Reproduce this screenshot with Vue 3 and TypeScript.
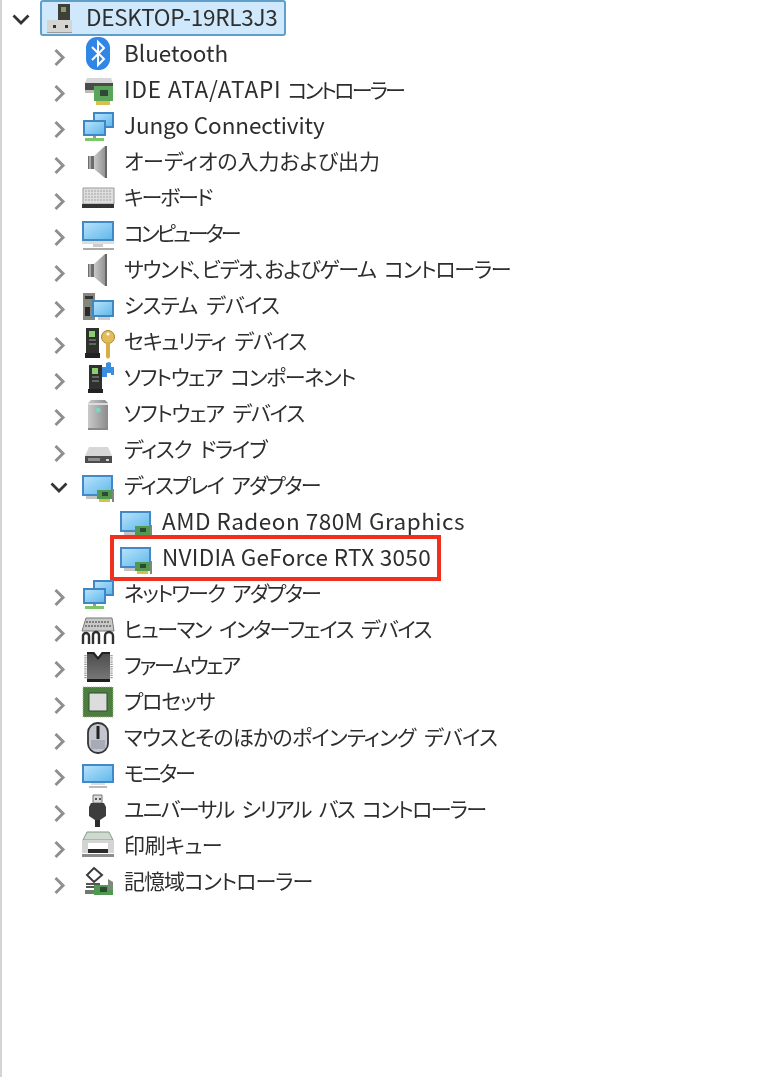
<script setup lang="ts">
interface Row { label: string; icon: string; level: number; ls: number; latinLs?: number; open?: boolean; leaf?: boolean; root?: boolean; marked?: boolean }
const rows: Row[] = [
  { label: 'DESKTOP-19RL3J3', icon: 'root', level: 0, ls: 0, latinLs: -0.27, open: true, root: true },
  { label: 'Bluetooth', icon: 'bluetooth', level: 1, ls: 0, latinLs: 0 },
  { label: 'IDE ATA/ATAPI コントローラー', icon: 'ide', level: 1, ls: -2.75, latinLs: 0.9 },
  { label: 'Jungo Connectivity', icon: 'network', level: 1, ls: 0, latinLs: -0.1 },
  { label: 'オーディオの入力および出力', icon: 'speaker', level: 1, ls: -0.07 },
  { label: 'キーボード', icon: 'keyboard', level: 1, ls: -2.15 },
  { label: 'コンピューター', icon: 'computer', level: 1, ls: -3 },
  { label: 'サウンド、ビデオ、およびゲーム コントローラー', icon: 'speaker', level: 1, ls: -1.22 },
  { label: 'システム デバイス', icon: 'system', level: 1, ls: -0.8 },
  { label: 'セキュリティ デバイス', icon: 'security', level: 1, ls: -1.15 },
  { label: 'ソフトウェア コンポーネント', icon: 'component', level: 1, ls: -1.44 },
  { label: 'ソフトウェア デバイス', icon: 'swdevice', level: 1, ls: -1.15 },
  { label: 'ディスク ドライブ', icon: 'disk', level: 1, ls: -1.25 },
  { label: 'ディスプレイ アダプター', icon: 'display', level: 1, ls: -1.72, open: true },
  { label: 'AMD Radeon 780M Graphics', icon: 'display', level: 2, ls: 0, latinLs: 0.5, leaf: true },
  { label: 'NVIDIA GeForce RTX 3050', icon: 'display', level: 2, ls: 0, latinLs: 0.3, leaf: true, marked: true },
  { label: 'ネットワーク アダプター', icon: 'network', level: 1, ls: -1.82 },
  { label: 'ヒューマン インターフェイス デバイス', icon: 'hid', level: 1, ls: -1.58 },
  { label: 'ファームウェア', icon: 'firmware', level: 1, ls: -2.15 },
  { label: 'プロセッサ', icon: 'cpu', level: 1, ls: -1.15 },
  { label: 'マウスとそのほかのポインティング デバイス', icon: 'mouse', level: 1, ls: -0.82 },
  { label: 'モニター', icon: 'monitor', level: 1, ls: -2.15 },
  { label: 'ユニバーサル シリアル バス コントローラー', icon: 'usb', level: 1, ls: -1.65 },
  { label: '印刷キュー', icon: 'printer', level: 1, ls: -0.35 },
  { label: '記憶域コントローラー', icon: 'storage', level: 1, ls: -0.95 },
]

interface Run { text: string; latin: boolean }
function runs(label: string): Run[] {
  const out: Run[] = []
  for (const m of label.matchAll(/[A-Za-z0-9][\x20-\x7e]*|[^A-Za-z0-9]+/g)) {
    out.push({ text: m[0], latin: /^[A-Za-z0-9]/.test(m[0]) })
  }
  return out
}
</script>

<template>
  <div class="tree">
    <svg class="defs" width="0" height="0" aria-hidden="true">
      <defs>
        <linearGradient id="screen" x1="0" y1="0" x2="1" y2="1">
          <stop offset="0" stop-color="#b5e2fa" />
          <stop offset="1" stop-color="#62b8ec" />
        </linearGradient>
        <linearGradient id="steel" x1="0" y1="0" x2="1" y2="0">
          <stop offset="0" stop-color="#c9c9c9" />
          <stop offset="1" stop-color="#8b8b8b" />
        </linearGradient>
        <linearGradient id="chip" x1="0" y1="0" x2="0" y2="1">
          <stop offset="0" stop-color="#4a4a4a" />
          <stop offset="1" stop-color="#7b7b7b" />
        </linearGradient>
        <symbol id="card" viewBox="0 0 36 36">
          <path d="M17 21h16v9H17z" fill="#4f9a50" />
          <path d="M22 23h6v4h-6z" fill="#2f4a34" />
          <path d="M19 30h11v3H19z" fill="#d8c04a" />
          <path d="M32 20h2v13h-2z" fill="#7c8a7c" />
        </symbol>
        <symbol id="i-root" viewBox="0 0 36 36">
          <path d="M16 4h12v16H16z" fill="#3e4038" />
          <path d="M19 7h5v5h-5z" fill="#7fa06e" />
          <path d="M5 20h25v13H5z" fill="#d4d4d2" />
          <path d="M11 25h3v3h-3zM23 25h3v3h-3z" fill="#333" />
          <path d="M5 32h25v1H5z" fill="#999" />
        </symbol>
        <symbol id="i-bluetooth" viewBox="0 0 36 36">
          <rect x="6" y="1" width="24" height="33" rx="11" fill="#2f86e6" />
          <path d="M12 11l12 12-6 6V6l6 6-12 12" fill="none" stroke="#fff" stroke-width="2" />
        </symbol>
        <symbol id="i-ide" viewBox="0 0 36 36">
          <path d="M7 6h24l2 5H5z" fill="#d6d6d6" />
          <path d="M5 11h28v7H5z" fill="#4b4b4b" />
          <path d="M5 18h11v3H5z" fill="#bbb" />
          <path d="M14 14h19v15H14z" fill="#5aa55a" />
          <path d="M20 18h8v6h-8z" fill="#2e4a34" />
          <path d="M16 29h14v4H16z" fill="#d8c04a" />
        </symbol>
        <symbol id="i-network" viewBox="0 0 36 36">
          <path d="M13 4h21v16H13z" fill="#3f86c4" />
          <path d="M15 6h17v12H15z" fill="url(#screen)" />
          <path d="M3 12h23v16H3z" fill="#3f86c4" />
          <path d="M5 14h19v12H5z" fill="url(#screen)" />
          <path d="M13 28h3v2h-3z" fill="#999" />
          <path d="M5 30h19v3H5z" fill="#7cc767" />
        </symbol>
        <symbol id="i-speaker" viewBox="0 0 36 36">
          <path d="M8 12h6v13H8z" fill="#6d6d6d" />
          <path d="M14 12l11-10h2v32h-2L14 25z" fill="url(#steel)" />
          <path d="M25 2h2v32h-2z" fill="#666" />
          <path d="M10 12v13" stroke="#bbb" stroke-width="1.5" />
        </symbol>
        <symbol id="i-keyboard" viewBox="0 0 36 36">
          <path d="M3 8h31v16H3z" fill="#dedede" stroke="#999" />
          <path d="M5 11h27M5 14h27M5 17h27M5 20h27" stroke="#a2a2a2" stroke-width="1.2" stroke-dasharray="2 1" />
          <path d="M2 24h32v4H2z" fill="#333" />
        </symbol>
        <symbol id="i-computer" viewBox="0 0 36 36">
          <path d="M2 5h32v20H2z" fill="#4488c8" />
          <path d="M4 7h28v16H4z" fill="url(#screen)" />
          <path d="M2 25h32v3H2z" fill="#dcdcdc" />
          <path d="M13 28h10v3H13z" fill="#ccc" />
          <path d="M3 32h31v2H3z" fill="#aaa" />
        </symbol>
        <symbol id="i-system" viewBox="0 0 36 36">
          <path d="M3 5h12v27H3z" fill="#83877c" />
          <path d="M5 8h8v3H5z" fill="#333" />
          <path d="M5 19h5v9H5z" fill="#2a2a2a" />
          <path d="M12 12h22v17H12z" fill="#3f86c4" />
          <path d="M14 14h18v13H14z" fill="url(#screen)" />
          <path d="M18 29h12v3H18z" fill="#ccc" />
        </symbol>
        <symbol id="i-security" viewBox="0 0 36 36">
          <path d="M6 4h13v25H6z" fill="#2f312c" />
          <path d="M9 7h6v6H9z" fill="#8ccf70" />
          <path d="M9 16h7M9 20h7" stroke="#777" stroke-width="1.5" />
          <path d="M5 29h15v5H5z" fill="#222" />
          <circle cx="28" cy="13" r="6.5" fill="#e2bd5a" stroke="#a8852a" />
          <path d="M26 18h4v15l-2 2-2-2z" fill="#d7ae47" />
          <circle cx="28" cy="10" r="1.5" fill="#fff" />
        </symbol>
        <symbol id="i-component" viewBox="0 0 36 36">
          <path d="M9 5h13v24H9z" fill="#2f312c" />
          <path d="M12 8h6v6h-6z" fill="#8ccf70" />
          <path d="M12 17h7M12 21h7" stroke="#777" stroke-width="1.5" />
          <path d="M8 29h15v4H8z" fill="#222" />
          <path d="M22 7h4V3l3-1 2 1v4h3v8h-3v-2h-4v4h-5z" fill="#3b8ede" />
        </symbol>
        <symbol id="i-swdevice" viewBox="0 0 36 36">
          <path d="M11 4h14l3 3v27H8V7z" fill="url(#steel)" />
          <path d="M8 7h20v2H8z" fill="#dcdcdc" />
          <circle cx="18" cy="14" r="2.5" fill="#7cd6c4" />
          <path d="M8 32h20v2H8z" fill="#8a8a8a" />
        </symbol>
        <symbol id="i-disk" viewBox="0 0 36 36">
          <path d="M9 15h19l4 9H5z" fill="#d7d7d7" />
          <path d="M5 24h27v7H5z" fill="#4c4c4c" />
          <path d="M8 26h12v3H8z" fill="#8f8f8f" />
          <path d="M26 27h3v2h-3z" fill="#cfcfcf" />
        </symbol>
        <symbol id="i-display" viewBox="0 0 36 36">
          <path d="M2 7h31v21H2z" fill="#4488c8" />
          <path d="M4 9h27v17H4z" fill="url(#screen)" />
          <path d="M6 28h12v3H6z" fill="#c4c4c4" />
          <use href="#card" x="0" y="1" width="36" height="36" />
        </symbol>
        <symbol id="i-hid" viewBox="0 0 36 36">
          <path d="M6 6h26l2 13H2z" fill="#c9c9c9" stroke="#777" />
          <path d="M6 10h24M5 14h26" stroke="#666" stroke-width="1.4" stroke-dasharray="2 1" />
          <path d="M3 32v-8a3 3 0 016 0v8M13 32v-9a3 3 0 016 0v9M25 32v-8a4 4 0 018 0v8" fill="none" stroke="#2f2f2f" stroke-width="2.4" />
        </symbol>
        <symbol id="i-firmware" viewBox="0 0 36 36">
          <path d="M7 4h7l4 5 4-5h8v30H7z" fill="url(#chip)" />
          <path d="M7 4h7l4 5 4-5h8v2h-7l-5 6-5-6H7z" fill="#222" />
          <path d="M5.500 7v24M31.500 7v24" stroke="#9a9a9a" stroke-width="2.4" stroke-dasharray="1.2 1" />
          <path d="M7 31h23v3H7z" fill="#1d1d1d" />
        </symbol>
        <symbol id="i-cpu" viewBox="0 0 36 36">
          <path d="M3 3h30v30H3z" fill="#4c7f3f" />
          <path d="M9 9h18v18H9z" fill="#dcdcdc" stroke="#2c4a2a" />
          <path d="M3 3h30v30H3z" fill="none" stroke="#a5b88c" stroke-dasharray="1 1" />
        </symbol>
        <symbol id="i-mouse" viewBox="0 0 36 36">
          <rect x="8" y="3" width="20" height="30" rx="9.500" fill="#c3c6cc" stroke="#35363a" stroke-width="1.8" />
          <path d="M18 6v13" stroke="#222" stroke-width="3" />
          <path d="M11 20h14v9H11z" fill="#8f96a2" opacity=".55" />
        </symbol>
        <symbol id="i-monitor" viewBox="0 0 36 36">
          <path d="M2 8h32v19H2z" fill="#4488c8" />
          <path d="M4 10h28v15H4z" fill="url(#screen)" />
          <path d="M11 27h14v2H11z" fill="#ddd" />
          <path d="M9 30h18v2H9z" fill="#bbb" />
        </symbol>
        <symbol id="i-usb" viewBox="0 0 36 36">
          <path d="M13 3h9v8h-9z" fill="#d9d9d9" stroke="#777" />
          <path d="M15 6h2v2h-2zM19 6h2v2h-2z" fill="#555" />
          <path d="M11 11h13l2 4v9l-6 4h-5l-6-4v-9z" fill="#3d3d3d" />
          <path d="M15 28h5v7h-5z" fill="#2c2c2c" />
        </symbol>
        <symbol id="i-printer" viewBox="0 0 36 36">
          <path d="M7 4h22l4 8H3z" fill="#cfd9cf" stroke="#7e9a85" />
          <path d="M2 12h32v13H2z" fill="#d4d4d4" />
          <path d="M8 15h20v7H8z" fill="#fff" />
          <path d="M8 21h20v4H8z" fill="#2a2a2a" />
          <path d="M2 26h32v3H2z" fill="#8b8b8b" />
        </symbol>
        <symbol id="i-storage" viewBox="0 0 36 36">
          <path d="M14 4l8 7-8 7-7-7z" fill="#fff" stroke="#3a3a3a" stroke-width="2" />
          <path d="M6 20h14M6 23h9" stroke="#555" stroke-width="2" />
          <path d="M5 26h12v4H5z" fill="#6c7c6a" />
          <path d="M14 21h19v10H14z" fill="#4f9a50" />
          <path d="M20 23h7v5h-7z" fill="#2f4a34" />
          <path d="M28 15l5 3v8h-5z" fill="#7c8a7c" />
        </symbol>
      </defs>
    </svg>

    <div
      v-for="row in rows"
      :key="row.label"
      class="row"
      :class="['level-' + row.level, { marked: row.marked, root: row.root }]"
    >
      <span class="chevron">
        <svg v-if="!row.leaf" width="26" height="36" viewBox="0 0 26 36">
          <path v-if="row.open" d="M5.500 15.500l7.500 7.500 7.500-7.500" fill="none" stroke="#333" stroke-width="2.800" />
          <path v-else d="M9.500 14l7.500 7.500-7.500 7.500" fill="none" stroke="#8f8f8f" stroke-width="3" />
        </svg>
      </span>
      <div class="entry">
        <svg class="icon" width="36" height="36"><use :href="'#i-' + row.icon" width="36" height="36" /></svg>
        <span class="label">
          <span
            v-for="(run, i) in runs(row.label)"
            :key="i"
            :class="run.latin ? 'latin' : 'kana'"
            :style="{ letterSpacing: (run.latin ? (row.latinLs ?? 0) : row.ls) + 'px' }"
          >{{ run.text }}</span>
        </span>
      </div>
    </div>
  </div>
</template>

<style>
html, body { background: #fff; }
</style>

<style scoped>
.tree {
  width: 775px;
  height: 1077px;
  box-sizing: border-box;
  border-left: 2px solid #d4d4d4;
  background: #fff;
  overflow: hidden;
  font-family: "Noto Sans CJK JP", "Noto Sans", sans-serif;
  font-feature-settings: "palt";
  color: #2e2e2e;
}
.defs { position: absolute; }
.row {
  position: relative;
  display: flex;
  align-items: center;
  height: 36px;
  white-space: nowrap;
}
.level-0 { padding-left: 6px; }
.level-1 { padding-left: 44px; }
.level-2 { padding-left: 82px; }
.chevron {
  flex: 0 0 26px;
  width: 26px;
  height: 36px;
  margin-right: 8px;
  filter: blur(0.5px);
}
.entry {
  display: flex;
  align-items: center;
  gap: 8px;
  height: 36px;
}
.root .entry {
  height: 36px;
  margin-top: -1px;
  margin-left: -2px;
  padding: 0 7px 0 0;
  background: #cfe8fb;
  border: 2px solid #5f9fc9;
  border-radius: 3px;
  box-sizing: border-box;
}
.icon { flex: none; filter: blur(0.7px); }
.label {
  filter: blur(0.55px);
  line-height: 32px;
  margin-bottom: 2px;
}
.root .label { margin-bottom: 1px; }
.latin { font-size: 22.5px; }
.kana { font-size: 21px; word-spacing: 5px; }
.marked::after {
  content: "";
  position: absolute;
  left: 108px;
  top: -5px;
  width: 331px;
  height: 46px;
  box-sizing: border-box;
  border: 4px solid #f0301c;
  pointer-events: none;
}
</style>
